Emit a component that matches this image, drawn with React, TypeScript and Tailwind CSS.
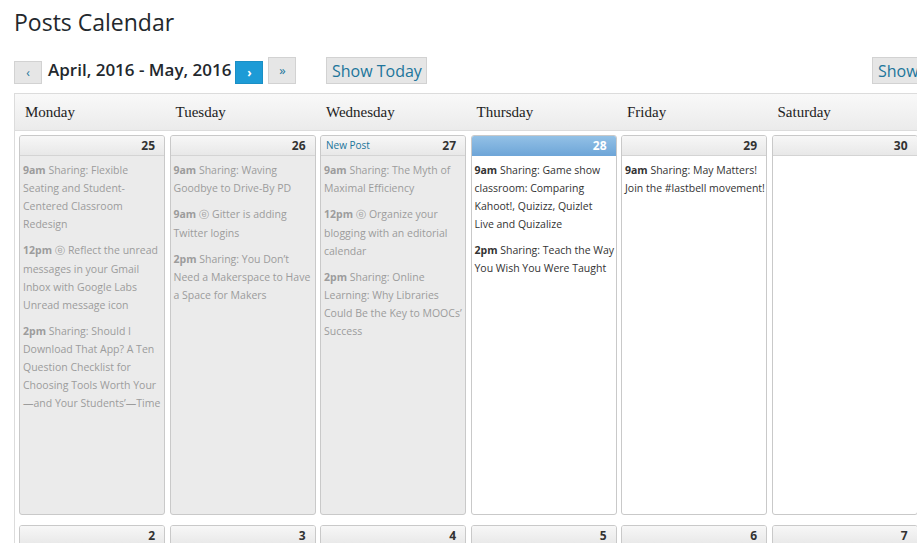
import React from 'react';

type Ev = { time: string; icon?: boolean; text: string };
type Day = { n: number; past?: boolean; today?: boolean; newPost?: boolean; events?: Ev[] };

const dayNames = ['Monday', 'Tuesday', 'Wednesday', 'Thursday', 'Friday', 'Saturday', 'Sunday'];

const week1: Day[] = [
  {
    n: 25,
    past: true,
    events: [
      { time: '9am', text: 'Sharing: Flexible Seating and Student-Centered Classroom Redesign' },
      { time: '12pm', icon: true, text: 'Reflect the unread messages in your Gmail Inbox with Google Labs Unread message icon' },
      { time: '2pm', text: 'Sharing: Should I Download That App? A Ten Question Checklist for Choosing Tools Worth Your\u200b\u2014and Your Students\u2019\u2014Time' },
    ],
  },
  {
    n: 26,
    past: true,
    events: [
      { time: '9am', text: 'Sharing: Waving Goodbye to Drive-By PD' },
      { time: '9am', icon: true, text: 'Gitter is adding Twitter logins' },
      { time: '2pm', text: 'Sharing: You Don\u2019t Need a Makerspace to Have a Space for Makers' },
    ],
  },
  {
    n: 27,
    past: true,
    newPost: true,
    events: [
      { time: '9am', text: 'Sharing: The Myth of Maximal Efficiency' },
      { time: '12pm', icon: true, text: 'Organize your blogging with an editorial calendar' },
      { time: '2pm', text: 'Sharing: Online Learning: Why Libraries Could Be the Key to MOOCs\u2019 Success' },
    ],
  },
  {
    n: 28,
    today: true,
    events: [
      { time: '9am', text: 'Sharing: Game show classroom: Comparing Kahoot!, Quizizz, Quizlet Live\u00a0and Quizalize' },
      { time: '2pm', text: 'Sharing: Teach the Way You Wish You Were Taught' },
    ],
  },
  { n: 29, events: [{ time: '9am', text: 'Sharing: May Matters! Join the #lastbell movement!' }] },
  { n: 30 },
  { n: 1 },
];

const week2: Day[] = [2, 3, 4, 5, 6, 7, 8].map((n) => ({ n }));

function DayCell({ day, tall }: { day: Day; tall?: boolean }) {
  const header = day.today
    ? 'bg-linear-to-b from-[#93c1e6] to-[#6fa6d8] border-[#6fa6d8] text-white'
    : 'bg-linear-to-b from-[#f7f7f7] to-[#e8e8e8] border-[#d4d4d4] text-[#333]';
  return (
    <div
      className={`w-[146px] rounded-[3px] border border-[#c9c9c9] overflow-hidden ${tall ? 'h-[380px]' : 'h-[60px]'} ${
        day.past ? 'bg-[#ebebeb]' : 'bg-white'
      }`}
    >
      <div className={`h-[20px] flex items-center justify-between px-[5px] pr-[9px] border-b ${header}`}>
        <span className="text-[10px] text-[#21759b]">{day.newPost ? 'New Post' : ''}</span>
        <span className="text-[12px] font-bold">{day.n}</span>
      </div>
      <div className={`pl-[3px] pt-[5px] text-[10.5px] leading-[18px] ${day.past ? 'text-[#9c9c9c]' : 'text-[#333]'}`}>
        {day.events?.map((e, i) => (
          <p key={i} className="mb-[8px]">
            <span className="font-bold">{e.time}</span> {e.icon && <span className="font-['DejaVu_Sans'] text-[10px]">{'\u24d4'} </span>}
            {e.text}
          </p>
        ))}
      </div>
    </div>
  );
}

export default function App() {
  return (
    <div className="w-[917px] h-[543px] overflow-hidden bg-white font-['Open_Sans',sans-serif] text-[#23282d]">
      <h1 className="pl-[14px] pt-[6px] text-[23px] leading-[32px] text-[#23282d]">Posts Calendar</h1>

      <div className="flex items-end h-[46px] pl-[14px]">
        <button className="w-[28px] h-[23px] bg-[#e6e6e6] border border-[#d2d2d2] text-[#21759b] text-[12px] leading-none">‹</button>
        <span className="ml-[6px] mr-[4px] mb-[3px] text-[17px] font-semibold leading-[23px] text-[#23282d]">April, 2016 - May, 2016</span>
        <button className="w-[28px] h-[23px] bg-[#1d9bd6] border border-[#1a8fc5] text-white text-[12px] font-bold leading-none">›</button>
        <button className="ml-[5px] w-[28px] h-[27px] bg-[#e6e6e6] border border-[#d2d2d2] text-[#21759b] text-[13px] leading-none">»</button>
        <button className="ml-[30px] w-[101px] h-[27px] bg-[#e6e6e6] border border-[#d2d2d2] text-[#21759b] text-[16px] leading-none">Show Today</button>
        <button className="ml-auto -mr-[40px] w-[85px] h-[27px] bg-[#e6e6e6] border border-[#d2d2d2] text-[#21759b] text-[16px] leading-none text-left pl-[5px]">Show</button>
      </div>

      <div className="ml-[14px] mt-[9px] w-[1060px] border-t border-l border-[#dcdcdc]">
        <div className="grid grid-cols-[repeat(7,150.5px)] h-[37px] bg-linear-to-b from-[#f9f9f9] to-[#ebebeb] border-b border-[#dcdcdc]">
          {dayNames.map((d) => (
            <div key={d} className="pl-[10px] flex items-center font-['Liberation_Serif',serif] text-[15px] text-[#222]">
              {d}
            </div>
          ))}
        </div>
        <div className="grid grid-cols-[repeat(7,150.5px)] pl-[4px] pt-[4px] gap-y-[10px]">
          {week1.map((d) => (
            <DayCell key={`a${d.n}`} day={d} tall />
          ))}
          {week2.map((d) => (
            <DayCell key={`b${d.n}`} day={d} />
          ))}
        </div>
      </div>
    </div>
  );
}
